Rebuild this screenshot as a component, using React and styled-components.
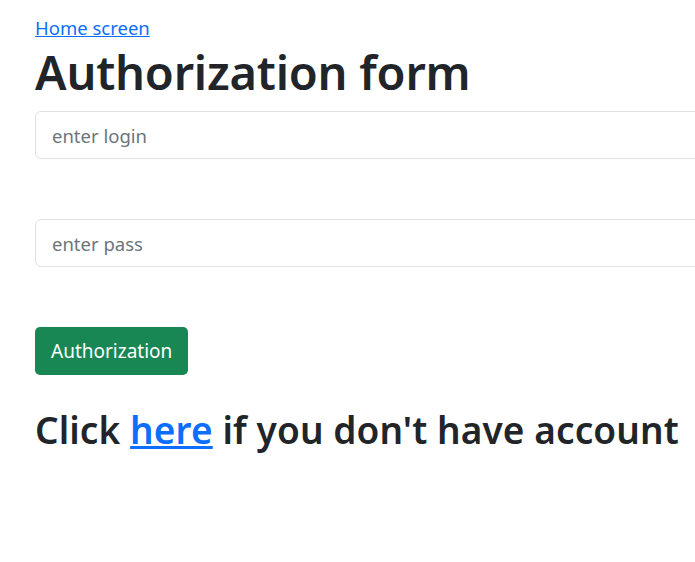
import React from 'react';
import styled, { createGlobalStyle } from 'styled-components';

const GlobalStyle = createGlobalStyle`
  body {
    margin: 0;
    background: #fff;
    color: #212529;
    font-family: "Noto Sans", "Open Sans", sans-serif;
  }
`;

const Page = styled.div`
  padding: 14px 0 0 35px;
  display: flex;
  flex-direction: column;
  align-items: flex-start;
  overflow: hidden;
`;

const HomeLink = styled.a`
  color: #0d6efd;
  font-size: 18.5px;
  line-height: 28px;
  text-decoration: underline;
`;

const Title = styled.h1`
  margin: 0;
  font-size: 47px;
  font-weight: 600;
  line-height: 60px;
  letter-spacing: -0.2px;
`;

const Form = styled.form`
  align-self: stretch;
  display: flex;
  flex-direction: column;
  align-items: flex-start;
  margin-top: 9px;
  gap: 60px;
`;

const Input = styled.input`
  box-sizing: border-box;
  width: calc(100% + 40px);
  height: 48px;
  padding: 0 16px;
  border: 1px solid #dee2e6;
  border-radius: 6px;
  font-family: inherit;
  font-size: 18.5px;
  color: #212529;
  outline: none;
  &::placeholder {
    color: #6c757d;
  }
`;

const Button = styled.button`
  height: 48px;
  padding: 0 16px;
  border: none;
  border-radius: 5px;
  background: #198754;
  color: #fff;
  font-family: inherit;
  font-size: 19px;
  cursor: pointer;
`;

const Note = styled.h2`
  margin: 25px 0 0;
  font-size: 37px;
  font-weight: 600;
  line-height: 60px;
  letter-spacing: 0.1px;
`;

const NoteLink = styled.a`
  color: #0d6efd;
  text-decoration: underline;
`;

export default function App() {
  return (
    <>
      <GlobalStyle />
      <Page>
        <HomeLink href="#">Home screen</HomeLink>
        <Title>Authorization form</Title>
        <Form onSubmit={(e) => e.preventDefault()}>
          <Input placeholder="enter login" />
          <Input type="password" placeholder="enter pass" />
          <Button type="submit">Authorization</Button>
        </Form>
        <Note>
          Click <NoteLink href="#">here</NoteLink> if you don't have account
        </Note>
      </Page>
    </>
  );
}
